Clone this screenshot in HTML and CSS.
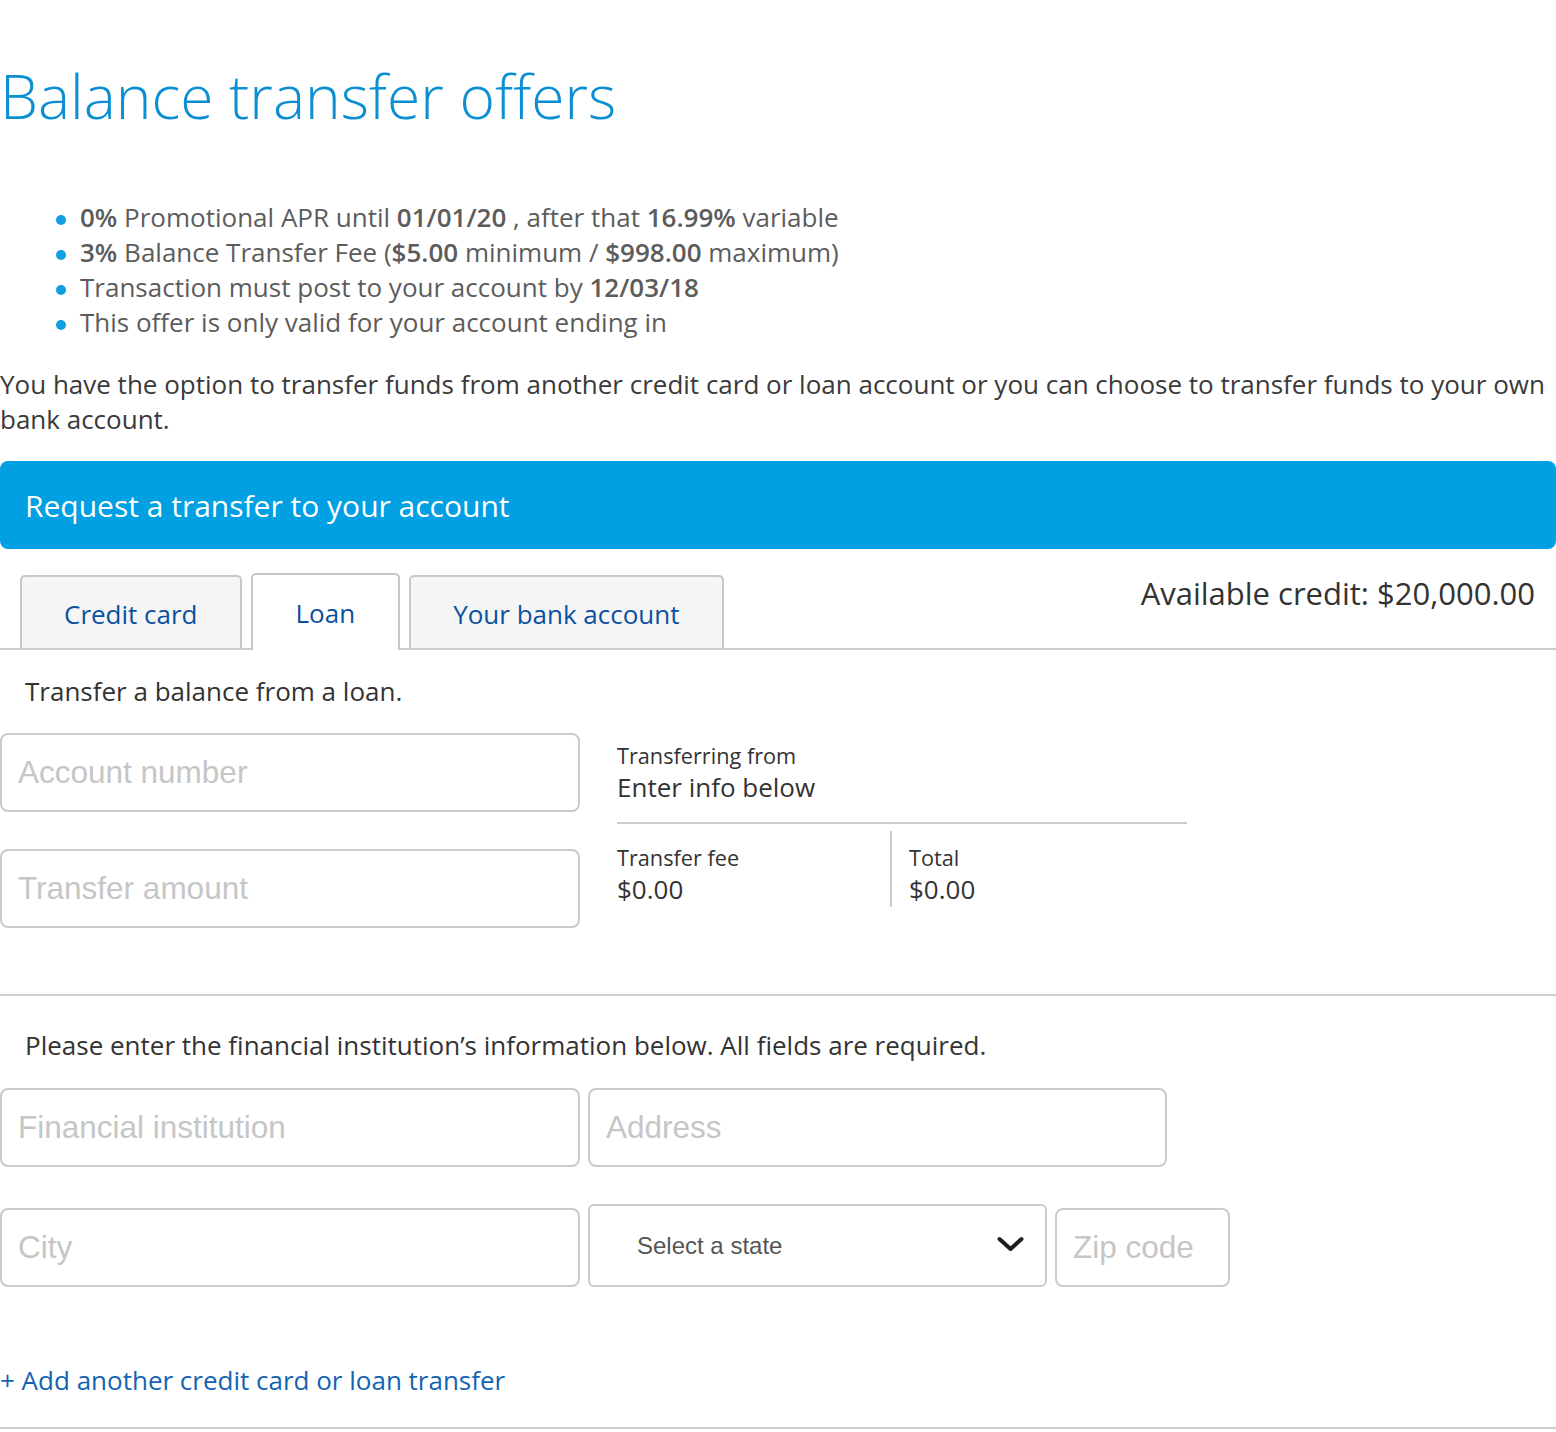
FILE: index.html
```html
<!DOCTYPE html>
<html lang="en">
<head>
<meta charset="utf-8">
<title>Balance transfer offers</title>
<link rel="stylesheet" href="styles.css">
</head>
<body>
<main class="page">
  <h1 class="title">Balance transfer offers</h1>
  <ul class="offers">
    <li><b>0%</b> Promotional APR until <b>01/01/20</b> , after that <b>16.99%</b> variable</li>
    <li><b>3%</b> Balance Transfer Fee (<b>$5.00</b> minimum / <b>$998.00</b> maximum)</li>
    <li>Transaction must post to your account by <b>12/03/18</b></li>
    <li>This offer is only valid for your account ending in</li>
  </ul>
  <p class="intro">You have the option to transfer funds from another credit card or loan account or you can choose to transfer funds to your own bank account.</p>

  <section class="panel">
    <div class="panel-head">Request a transfer to your account</div>
    <div class="tabs">
      <button class="tab" type="button">Credit card</button>
      <button class="tab active" type="button">Loan</button>
      <button class="tab" type="button">Your bank account</button>
      <div class="available">Available credit: $20,000.00</div>
    </div>

    <p class="lead">Transfer a balance from a loan.</p>
    <div class="loan-row">
      <div class="loan-fields">
        <input class="field" type="text" placeholder="Account number">
        <input class="field" type="text" placeholder="Transfer amount">
      </div>
      <div class="summary">
        <div class="summary-top">
          <div class="s-label">Transferring from</div>
          <div class="s-value">Enter info below</div>
        </div>
        <div class="summary-bottom">
          <div class="s-cell">
            <div class="s-label">Transfer fee</div>
            <div class="s-value">$0.00</div>
          </div>
          <div class="s-cell s-total">
            <div class="s-label">Total</div>
            <div class="s-value">$0.00</div>
          </div>
        </div>
      </div>
    </div>

    <hr class="rule rule-mid">

    <p class="lead lead-inst">Please enter the financial institution’s information below. All fields are required.</p>
    <div class="inst-row">
      <input class="field w-wide" type="text" placeholder="Financial institution">
      <input class="field w-addr" type="text" placeholder="Address">
    </div>
    <div class="inst-row inst-row2">
      <input class="field w-wide" type="text" placeholder="City">
      <div class="select" role="combobox" aria-expanded="false">
        <span>Select a state</span>
        <svg class="chev" width="27" height="16" viewBox="0 0 27 16" aria-hidden="true"><path d="M2.5 3 L13.5 13 L24.5 3" fill="none" stroke="#1e1e1e" stroke-width="4" stroke-linecap="round" stroke-linejoin="round"/></svg>
      </div>
      <input class="field w-zip" type="text" placeholder="Zip code">
    </div>

    <a class="add-link" href="#">+ Add another credit card or loan transfer</a>
    <hr class="rule rule-end">
  </section>
</main>
</body>
</html>
```

FILE: styles.css
```css
html, body {
  margin: 0;
  padding: 0;
  background: #ffffff;
}

body {
  font-family: "Open Sans", "Liberation Sans", sans-serif;
  color: #333333;
}

.page {
  width: 1556px;
}

.title {
  margin: 56px 0 0;
  font-size: 60.5px;
  font-weight: 300;
  line-height: 79px;
  color: #0b8fd2;
}

.offers {
  list-style: none;
  margin: 65px 0 0;
  padding: 0 0 0 80px;
  font-size: 26px;
  line-height: 35px;
  color: #5c5c5c;
}

.offers b {
  font-weight: 600;
}

.offers li::before {
  content: "";
  display: inline-block;
  width: 10px;
  height: 10px;
  border-radius: 50%;
  background: #109fe2;
  margin-left: -24px;
  margin-right: 14px;
  vertical-align: middle;
}

.intro {
  margin: 27px 0 0;
  font-size: 26px;
  line-height: 35px;
  color: #3a3a3a;
}

.panel-head {
  margin-top: 24px;
  height: 88px;
  box-sizing: border-box;
  padding-left: 25px;
  display: flex;
  align-items: center;
  background: #00a0e2;
  border-radius: 8px;
  color: #ffffff;
  font-size: 30px;
}

.tabs {
  margin-top: 24px;
  height: 75px;
  display: flex;
  align-items: flex-end;
  gap: 9px;
  padding-left: 20px;
  border-bottom: 2px solid #cccccc;
}

.tab {
  box-sizing: border-box;
  height: 73px;
  margin: 0;
  padding: 2px 42px 0;
  display: flex;
  align-items: center;
  justify-content: center;
  border: 2px solid #c8c8c8;
  border-bottom: none;
  border-radius: 5px 5px 0 0;
  background: #f5f5f5;
  color: #0b51a0;
  font-family: "Open Sans", sans-serif;
  font-size: 26px;
  cursor: pointer;
}

.tab.active {
  height: 77px;
  margin-bottom: -2px;
  padding: 0 43px;
  background: #ffffff;
}

.available {
  margin-left: auto;
  margin-right: 21px;
  align-self: flex-start;
  font-size: 31px;
  line-height: 40px;
  color: #333333;
}

.lead {
  margin: 24px 0 0 25px;
  font-size: 26px;
  line-height: 35px;
  color: #333333;
}

.loan-row {
  margin-top: 24px;
  display: flex;
  gap: 37px;
}

.loan-fields {
  width: 580px;
  display: flex;
  flex-direction: column;
  gap: 37px;
}

.field {
  box-sizing: border-box;
  display: block;
  width: 100%;
  height: 79px;
  margin: 0;
  padding: 0 16px;
  border: 2px solid #cbcbcb;
  border-radius: 8px;
  background: #ffffff;
  font-family: "Liberation Sans", Arial, sans-serif;
  font-size: 31.5px;
  color: #333333;
  outline: none;
}

.field::placeholder {
  color: #c6c6c6;
  opacity: 1;
}

.summary {
  width: 570px;
  padding-top: 9px;
  color: #333333;
}

.s-label {
  font-size: 21.7px;
  line-height: 28px;
}

.s-value {
  font-size: 26px;
  line-height: 34px;
}

.summary-top {
  padding-bottom: 18px;
  border-bottom: 2px solid #cccccc;
}

.summary-bottom {
  margin-top: 7px;
  display: flex;
}

.s-cell {
  box-sizing: border-box;
  width: 273px;
  padding-top: 13px;
  padding-bottom: 1px;
}

.s-total {
  border-left: 2px solid #cccccc;
  padding-left: 17px;
}

.rule {
  height: 0;
  border: 0;
  border-top: 2px solid #d0d0d0;
}

.rule-mid {
  margin: 66px 0 0;
}

.lead-inst {
  margin-top: 32px;
}

.inst-row {
  margin-top: 25px;
  display: flex;
  gap: 8px;
}

.inst-row2 {
  margin-top: 37px;
  align-items: flex-end;
}

.w-wide {
  width: 580px;
}

.w-addr {
  width: 579px;
}

.w-zip {
  width: 175px;
}

.select {
  box-sizing: border-box;
  width: 459px;
  height: 83px;
  padding: 0 21px 0 47px;
  display: flex;
  align-items: center;
  justify-content: space-between;
  border: 2px solid #cbcbcb;
  border-radius: 6px;
  font-family: "Liberation Sans", Arial, sans-serif;
  font-size: 24px;
  color: #555555;
}

.chev {
  display: block;
  margin-top: -4px;
}

.add-link {
  display: block;
  margin-top: 76px;
  font-size: 26px;
  line-height: 35px;
  color: #1463b3;
  text-decoration: none;
}

.rule-end {
  margin: 29px 0 0;
}
```
